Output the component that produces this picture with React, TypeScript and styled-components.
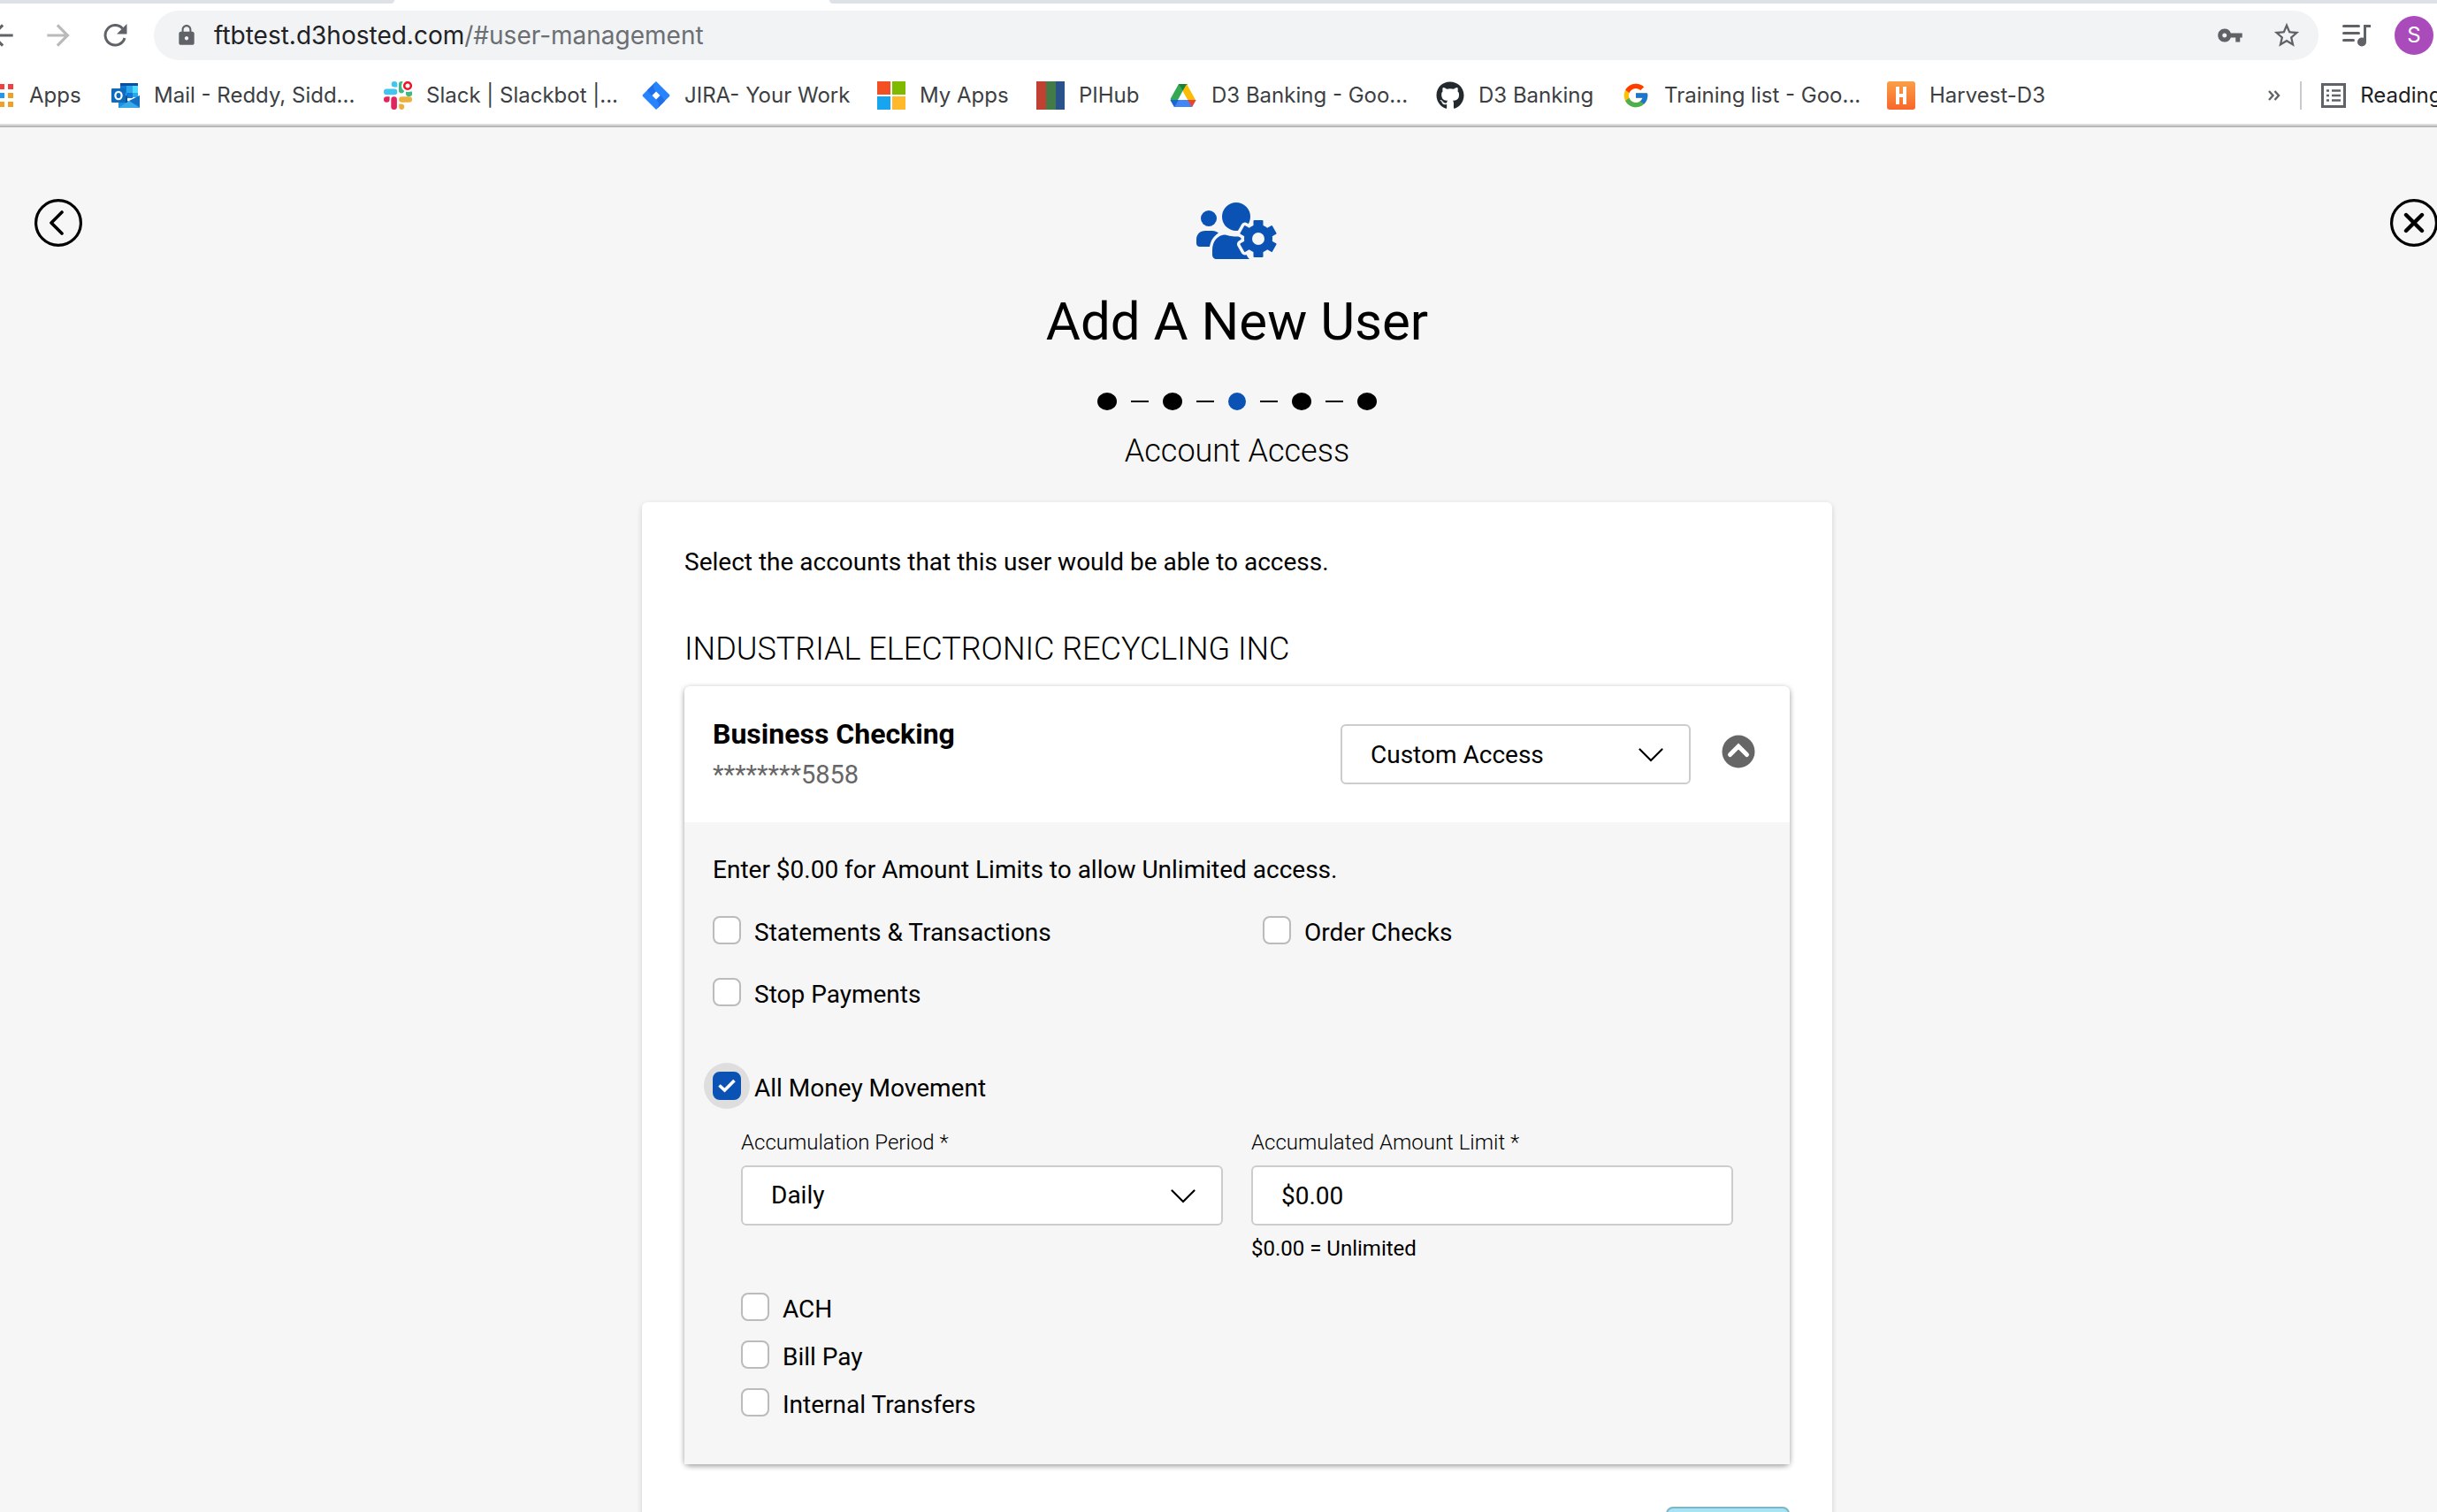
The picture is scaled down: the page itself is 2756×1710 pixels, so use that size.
import React, { useState } from "react";
import styled, { createGlobalStyle, css } from "styled-components";
import { FaGithub } from "react-icons/fa";
import { FcGoogle } from "react-icons/fc";
import { MdArrowBack, MdArrowForward, MdLock, MdVpnKey, MdStarBorder } from "react-icons/md";

const BLUE = "#0a53b5";
const PAGE = "#f6f6f6";

const GlobalStyle = createGlobalStyle`
  *, *::before, *::after { box-sizing: border-box; }
  body { margin: 0; font-family: Roboto, "Liberation Sans", sans-serif; font-size: 28px; color: #000; }
  button, input, select { font: inherit; color: inherit; margin: 0; }
`;

const Screen = styled.div`
  height: 100vh;
  overflow: hidden;
  background: ${PAGE};
`;

/* ---------- browser chrome ---------- */

const Chrome = styled.header`
  background: #fff;
  border-bottom: 2px solid #b8b8b8;
  box-shadow: inset 0 -2px 0 #dcdcdc;
  font-family: Inter, "Liberation Sans", sans-serif;
`;

const TabStrip = styled.div`
  display: grid;
  grid-template-columns: 446fr 492px 1818fr;
  height: 6px;
`;

const InactiveTab = styled.div<{ $side: "left" | "right" }>`
  grid-column: ${(p) => (p.$side === "left" ? 1 : 3)};
  height: 4px;
  background: #dee1e6;
  border-bottom-right-radius: ${(p) => (p.$side === "left" ? 8 : 0)}px;
  border-bottom-left-radius: ${(p) => (p.$side === "right" ? 8 : 0)}px;
`;

const Toolbar = styled.div`
  display: flex;
  align-items: center;
  height: 68px;
  margin-left: -26px;
  padding-right: 4px;
`;

const IconButton = styled.button<{ $width?: number; $color?: string }>`
  display: flex;
  flex: none;
  align-items: center;
  justify-content: center;
  width: ${(p) => p.$width ?? 56}px;
  height: 56px;
  padding: 0;
  border: 0;
  background: none;
  color: ${(p) => p.$color ?? "#5f6368"};
`;

const Nav = styled.nav`
  display: flex;
  gap: 8px;
  margin-right: 16px;
`;

const AddressBar = styled.div`
  display: flex;
  flex: 1;
  align-items: center;
  gap: 8px;
  height: 56px;
  padding: 0 8px 0 24px;
  border-radius: 28px;
  background: #f1f3f4;
  color: #5f6368;
`;

const Url = styled.span`
  flex: 1;
  padding-left: 10px;
  font-size: 28px;
  line-height: 36px;
  color: #6b6e72;
`;

const Host = styled.span`
  color: #202124;
`;

const Avatar = styled.button`
  width: 44px;
  height: 44px;
  padding: 0;
  border: 0;
  border-radius: 50%;
  background: #aa4bbb;
  color: #fff;
  font-size: 24px;
  line-height: 44px;
`;

const Bookmarks = styled.div`
  display: flex;
  align-items: center;
  height: 68px;
  margin-left: -11px;
  font-size: 24px;
  color: #3c4043;
`;

const Bookmark = styled.a<{ $width?: number }>`
  display: flex;
  flex: none;
  align-items: center;
  gap: 16px;
  width: ${(p) => (p.$width ? p.$width + "px" : "auto")};
  color: inherit;
  line-height: 32px;
  text-decoration: none;
  white-space: nowrap;
  svg { flex: none; }
`;

const Divider = styled.span`
  width: 2px;
  height: 32px;
  background: #c6c9cd;
`;

const Spacer = styled.div`
  flex: 1;
`;

const Overflow = styled.div`
  display: flex;
  align-items: center;
  gap: 22px;
  margin-right: -52px;
  color: #202124;
`;

/* ---------- page ---------- */

const Page = styled.main`
  display: grid;
  grid-template-columns: 56px minmax(0, 1346px) 54px;
  justify-content: space-between;
  align-items: start;
  width: calc(100% + 40px);
  padding: 81px 39px 0;
`;

const RoundButton = styled.button`
  display: flex;
  width: 54px;
  height: 54px;
  padding: 0;
  border: 0;
  background: none;
`;

const Wizard = styled.div`
  display: flex;
  flex-direction: column;
  align-items: center;
  padding-top: 4px;
`;

const Title = styled.h1`
  margin: 33px 0 0;
  font-size: 60px;
  font-weight: 400;
  line-height: 76px;
`;

const Steps = styled.ol`
  display: flex;
  align-items: center;
  gap: 16px;
  margin: 42px 0 0;
  padding: 0;
  list-style: none;
`;

const Dot = styled.li<{ $active?: boolean }>`
  width: ${(p) => (p.$active ? 20 : 22)}px;
  height: 20px;
  border-radius: 50%;
  background: ${(p) => (p.$active ? BLUE : "#000")};
`;

const Dash = styled.li`
  width: 20px;
  height: 2px;
  background: #000;
`;

const heading = css`
  font-size: 36px;
  font-weight: 300;
  line-height: 44px;
`;

const StepName = styled.h2`
  ${heading}
  margin: 24px 0 36px;
`;

const Card = styled.section`
  width: 100%;
  padding: 48px;
  border-radius: 6px;
  background: #fff;
  box-shadow: 0 2px 6px rgba(0, 0, 0, 0.16);
`;

const Text = styled.p`
  margin: 0;
  line-height: 40px;
`;

const Company = styled.h3`
  ${heading}
  margin: 56px 0 20px;
`;

const Account = styled.section`
  border-radius: 6px;
  background: #fff;
  box-shadow: 0 2px 6px rgba(0, 0, 0, 0.4);
`;

const AccountHead = styled.header`
  display: flex;
  align-items: center;
  height: 154px;
  padding: 0 39px 0 32px;
`;

const AccountName = styled.div`
  display: grid;
  flex: 1;
  gap: 2px;
  line-height: 44px;
  h4 { margin: 0; font-size: 32px; font-weight: 700; }
  p { margin: 0; font-size: 29px; color: #666; }
`;

const SelectBox = styled.div<{ $width?: number }>`
  position: relative;
  width: ${(p) => (p.$width ? p.$width + "px" : "100%")};
  svg { position: absolute; right: 31px; top: 27px; pointer-events: none; }
`;

const control = css`
  display: block;
  width: 100%;
  height: 68px;
  padding: 0 32px;
  border: 2px solid #ccc;
  border-radius: 6px;
  background: #fff;
  appearance: none;
`;

const Select = styled.select`
  ${control}
`;

const Input = styled.input`
  ${control}
`;

const Toggle = styled.button`
  display: flex;
  width: 38px;
  height: 38px;
  margin: 0 0 6px 35px;
  padding: 0;
  border: 0;
  background: none;
`;

const AccountBody = styled.div`
  padding: 34px 32px 46px;
  background: ${PAGE};
`;

const Permissions = styled.div`
  display: grid;
  grid-template-columns: 1fr 1fr;
  gap: 28px 58px;
  margin: 30px 0 64px;
`;

const CheckRow = styled.label`
  display: flex;
  align-items: flex-start;
  gap: 15px;
  line-height: 42px;
`;

const CheckBox = styled.input`
  flex: none;
  width: 32px;
  height: 32px;
  border: 2px solid #bbb;
  border-radius: 8px;
  background: #fff;
  appearance: none;
  &:checked {
    border-color: ${BLUE};
    background: ${BLUE};
  }
`;

const CheckMark = styled.span<{ $halo?: boolean }>`
  position: relative;
  display: flex;
  width: 32px;
  height: 32px;
  margin-top: 2px;
  border-radius: 50%;
  box-shadow: ${(p) => (p.$halo ? "0 0 0 10px #dedede" : "none")};
  background: ${(p) => (p.$halo ? "#dedede" : "none")};
  svg { position: absolute; left: 6px; top: 8px; pointer-events: none; }
`;

const Nested = styled.div`
  padding: 0 32px;
`;

const Fields = styled.div`
  display: grid;
  grid-template-columns: 1fr 1fr;
  gap: 32px;
  margin: 24px 0 32px;
`;

const Field = styled.div`
  font-size: 24px;
  line-height: 32px;
  > label { display: block; margin-bottom: 10px; font-weight: 300; }
  select, input { font-size: 28px; }
  p { margin: 10px 0 0; }
`;

const Stack = styled.div`
  display: grid;
  gap: 12px;
`;

const Actions = styled.footer`
  display: flex;
  justify-content: flex-end;
  padding-top: 48px;
`;

const NextButton = styled.button`
  width: 140px;
  height: 68px;
  border: 2px solid #7fb5c4;
  border-radius: 8px;
  background: #a6e3f4;
`;

/* ---------- drawings ---------- */

const ReloadIcon = () => (
  <svg width="28" height="28" viewBox="0 0 28 28" fill="none">
    <path d="M22.5 6.2A11.2 11.2 0 1 0 25 17" stroke="currentColor" strokeWidth="3" />
    <path d="M27.5 1v11.5H16z" fill="currentColor" />
  </svg>
);

const QueueIcon = () => (
  <svg width="32" height="28" viewBox="0 0 32 28" fill="none">
    <path d="M1.5 3.5h17M1.5 11.5h17M1.5 19.5h11" stroke="currentColor" strokeWidth="3" strokeLinecap="round" />
    <path d="M25.5 21V3.5H32" stroke="currentColor" strokeWidth="3" />
    <circle cx="22" cy="21.5" r="5" fill="currentColor" />
  </svg>
);

const AppsIcon = () => (
  <svg width="28" height="28" viewBox="0 0 28 28">
    {["#f44336", "#f43f3f", "#f43f3f", "#4caf50", "#2196f3", "#f0a023", "#4caf50", "#f0a023", "#f0a023"].map((c, i) => (
      <rect key={i} x={(i % 3) * 10} y={1 + Math.floor(i / 3) * 10} width="6" height="6" fill={c} />
    ))}
  </svg>
);

const OutlookIcon = () => (
  <svg width="32" height="32" viewBox="0 0 32 32">
    <path d="M10 2h20v16H10z" fill="#28a8ea" />
    <path d="M10 2h20v3H10z" fill="#0a4f9e" />
    <path d="M10 5h7v8h-7z" fill="#0f78d4" />
    <path d="M24 5h6v8h-6z" fill="#50d9ff" />
    <path d="M17 13h7v6h-7z" fill="#0f78d4" />
    <path d="M8 16l12 7 12-7v14H8z" fill="#1f8fdd" />
    <path d="M8 30h24L20 22z" fill="#38aaea" />
    <path d="M20 22l12-6v13z" fill="#1470c4" />
    <path d="M8 24h10v-8l-10 2z" fill="#0c5299" />
    <rect x="0" y="8" width="16" height="16" rx="1" fill="#0f6cbd" />
    <ellipse cx="8" cy="16" rx="3.6" ry="4.2" fill="none" stroke="#fff" strokeWidth="2.2" />
  </svg>
);

const SlackIcon = () => (
  <svg width="32" height="32" viewBox="0 0 32 32">
    <path d="M12 0a3.3 3.3 0 0 1 3.3 3.3v3.3H12a3.3 3.3 0 0 1 0-6.6zM3.3 8.6H12a3.3 3.3 0 0 1 0 6.6H3.3a3.3 3.3 0 0 1 0-6.6z" fill="#44c5f0" />
    <path d="M17 3a3 3 0 0 1 6 0v8.5a3.3 3.3 0 0 1-6 0zM25 11.5h7a3.3 3.3 0 0 1-7 3.5z" fill="#41b883" />
    <path d="M32 20.5a3.3 3.3 0 0 1-3.3 3.3h-8.2a3.3 3.3 0 0 1 0-6.6h8.2a3.3 3.3 0 0 1 3.3 3.3zM20.5 32a3.3 3.3 0 0 1-3.3-3.3v-3.2h3.3a3.3 3.3 0 0 1 0 6.5z" fill="#ecb13c" />
    <path d="M0 20.5a3.3 3.3 0 0 1 3.3-3.3h3.3v3.3a3.3 3.3 0 0 1-6.6 0zM8.3 20.5a3.3 3.3 0 0 1 6.6 0v8.2a3.3 3.3 0 0 1-6.6 0z" fill="#e0245e" />
    <circle cx="27" cy="5" r="7" fill="#fff" />
    <circle cx="27" cy="5" r="3.8" fill="#fff" stroke="#f01428" strokeWidth="2.6" />
  </svg>
);

const JiraIcon = () => (
  <svg width="32" height="32" viewBox="0 0 32 32">
    <path d="M16 0l15 15a1.5 1.5 0 0 1 0 2L16 32 1 17a1.5 1.5 0 0 1 0-2z" fill="#2684ff" />
    <path d="M16 0c-4 4-4 8 0 11.5L11 16.5 6 10z" fill="#1f6fe8" />
    <path d="M16 32c4-4 4-8 0-11.5L21 15.5 26 22z" fill="#1f6fe8" />
    <path d="M16 11.5l4.5 4.5-4.5 4.5-4.5-4.5z" fill="#fff" />
  </svg>
);

const MicrosoftIcon = () => (
  <svg width="32" height="32" viewBox="0 0 32 32">
    <path d="M0 0h15v15H0z" fill="#f25022" />
    <path d="M17 0h15v15H17z" fill="#7fba00" />
    <path d="M0 17h15v15H0z" fill="#18a5ef" />
    <path d="M17 17h15v15H17z" fill="#ffb92a" />
  </svg>
);

const StripesIcon = () => (
  <svg width="32" height="32" viewBox="0 0 32 32">
    <path d="M0 0h11v32H0z" fill="#c04132" />
    <path d="M11 0h11v32H11z" fill="#437a48" />
    <path d="M22 0h10v32H22z" fill="#2a528a" />
  </svg>
);

const DriveIcon = () => (
  <svg width="32" height="32" viewBox="0 0 32 32">
    <path d="M11 3h9l-4.5 8L7 28 1.5 20z" fill="#34a853" />
    <path d="M11 3h10l-5 8z" fill="#188038" />
    <path d="M20 3l10 18h-9L15.5 11z" fill="#fbbc04" />
    <path d="M1.5 21h29L26 29H6z" fill="#4285f4" />
    <path d="M1.5 21H11l-5 8z" fill="#1967d2" />
    <path d="M21 21h9.5L26 29z" fill="#ea4335" />
    <path d="M15.5 11.5L21 21H10z" fill="#fff" />
  </svg>
);

const HarvestIcon = () => (
  <svg width="32" height="32" viewBox="0 0 32 32">
    <defs>
      <linearGradient id="harvest" x1="0" y1="0" x2="0" y2="1">
        <stop offset="0" stopColor="#fa9f47" />
        <stop offset="1" stopColor="#f8672a" />
      </linearGradient>
    </defs>
    <rect width="32" height="32" rx="3" fill="url(#harvest)" />
    <path d="M10 6h4v8h4V6h4v20h-4v-8h-4v8h-4z" fill="#fff" />
  </svg>
);

const ReadingListIcon = () => (
  <svg width="28" height="28" viewBox="0 0 28 28" fill="none" stroke="#5f6368">
    <path d="M1.5 1.5h25v25h-25z" strokeWidth="3" />
    <path d="M6 8.5h3M12 8.5h10M6 14h3M12 14h10M6 19.5h3M12 19.5h10" strokeWidth="2.6" />
  </svg>
);

const ChevronsIcon = () => (
  <svg width="14" height="12" viewBox="0 0 14 12" fill="none" stroke="#5f6368" strokeWidth="2.4">
    <path d="M1 1l4.5 5L1 11M7.5 1l4.5 5-4.5 5" />
  </svg>
);

const BackCircleIcon = () => (
  <svg width="54" height="54" viewBox="0 0 54 54" fill="none" stroke="#000" strokeLinecap="round" strokeLinejoin="round">
    <circle cx="27" cy="27" r="25.4" strokeWidth="3.2" />
    <path d="M31 15L19 27l12 12" strokeWidth="3.6" />
  </svg>
);

const CloseCircleIcon = () => (
  <svg width="54" height="54" viewBox="0 0 54 54" fill="none" stroke="#000" strokeLinecap="round">
    <circle cx="27" cy="27" r="25.4" strokeWidth="3.2" />
    <path d="M18 18l18 18M36 18L18 36" strokeWidth="4.4" />
  </svg>
);

const Gear = () => (
  <>
    <circle cx="70" cy="41" r="16" />
    {[0, 60, 120].map((angle) => (
      <rect key={angle} x="64.5" y="20" width="11" height="42" rx="1" transform={`rotate(${angle} 70 41)`} />
    ))}
  </>
);

const UsersGearIcon = () => (
  <svg width="92" height="64" viewBox="0 0 92 64" fill={BLUE}>
    <circle cx="14" cy="18" r="9" />
    <path d="M10 32h8c3 0 5 1 7 2.5-6 4-9 9-10 15.5H4c-2.5 0-4-1.5-4-4v-4c0-6 4-10 10-10z" />
    <circle cx="45" cy="16" r="16" />
    <path d="M33 36.5c4 1.5 14 3 20 1.5 4 8-2 16 7 26H23c-3 0-5-2-5-5v-5c0-10 6-17.5 15-17.5z" />
    <g stroke={PAGE} strokeWidth="7" strokeLinejoin="round">
      <Gear />
    </g>
    <Gear />
    <circle cx="70" cy="41" r="7" fill={PAGE} />
  </svg>
);

const ChevronDown = () => (
  <svg width="28" height="16" viewBox="0 0 28 16" fill="none">
    <path d="M1.5 1.5L14 14 26.5 1.5" stroke="#000" strokeWidth="2.2" strokeLinecap="round" />
  </svg>
);

const ToggleIcon = () => (
  <svg width="38" height="38" viewBox="0 0 38 38" fill="none">
    <circle cx="19" cy="19" r="18.5" fill="#666" />
    <path d="M9.5 22.5l9.5-9.5 9.5 9.5" stroke="#fff" strokeWidth="5" strokeLinecap="round" />
  </svg>
);

const TickIcon = () => (
  <svg width="20" height="16" viewBox="0 0 20 16" fill="none">
    <path d="M1.5 7.5L7.5 13 18.5 2" stroke="#fff" strokeWidth="3.6" />
  </svg>
);

const bookmarks = [
  { label: "Apps", icon: <AppsIcon />, width: 137 },
  { label: "Mail - Reddy, Sidd...", icon: <OutlookIcon />, width: 308 },
  { label: "Slack | Slackbot |...", icon: <SlackIcon />, width: 292 },
  { label: "JIRA- Your Work", icon: <JiraIcon />, width: 266 },
  { label: "My Apps", icon: <MicrosoftIcon />, width: 180 },
  { label: "PIHub", icon: <StripesIcon />, width: 150 },
  { label: "D3 Banking - Goo...", icon: <DriveIcon />, width: 302 },
  { label: "D3 Banking", icon: <FaGithub size={32} color="#24292e" />, width: 210 },
  { label: "Training list - Goo...", icon: <FcGoogle size={32} />, width: 300 },
  { label: "Harvest-D3", icon: <HarvestIcon />, width: 200 },
];

function Check({ label, focused }: { label: string; focused?: boolean }) {
  const [checked, setChecked] = useState(!!focused);
  return (
    <CheckRow>
      <CheckMark $halo={focused}>
        <CheckBox type="checkbox" checked={checked} onChange={() => setChecked(!checked)} />
        {checked && <TickIcon />}
      </CheckMark>
      {label}
    </CheckRow>
  );
}

export default function App() {
  return (
    <Screen>
      <GlobalStyle />
      <Chrome>
        <TabStrip>
          <InactiveTab $side="left" />
          <InactiveTab $side="right" />
        </TabStrip>
        <Toolbar>
          <Nav>
            <IconButton aria-label="Back"><MdArrowBack size={38} /></IconButton>
            <IconButton aria-label="Forward" $color="#bababa"><MdArrowForward size={38} /></IconButton>
            <IconButton aria-label="Reload"><ReloadIcon /></IconButton>
          </Nav>
          <AddressBar>
            <MdLock size={26} />
            <Url><Host>ftbtest.d3hosted.com</Host>/#user-management</Url>
            <IconButton aria-label="Passwords"><MdVpnKey size={30} /></IconButton>
            <IconButton aria-label="Bookmark this page"><MdStarBorder size={34} /></IconButton>
          </AddressBar>
          <IconButton aria-label="Media controls" $width={86}><QueueIcon /></IconButton>
          <Avatar>S</Avatar>
        </Toolbar>
        <Bookmarks>
          {bookmarks.map((b) => (
            <Bookmark key={b.label} href="#" $width={b.width}>{b.icon}{b.label}</Bookmark>
          ))}
          <Spacer />
          <Overflow>
            <ChevronsIcon />
            <Divider />
            <Bookmark href="#"><ReadingListIcon />Reading List</Bookmark>
          </Overflow>
        </Bookmarks>
      </Chrome>

      <Page>
        <RoundButton aria-label="Go back"><BackCircleIcon /></RoundButton>
        <Wizard>
          <UsersGearIcon />
          <Title>Add A New User</Title>
          <Steps aria-label="Progress">
            <Dot /><Dash /><Dot /><Dash /><Dot $active /><Dash /><Dot /><Dash /><Dot />
          </Steps>
          <StepName>Account Access</StepName>
          <Card>
            <Text>Select the accounts that this user would be able to access.</Text>
            <Company>INDUSTRIAL ELECTRONIC RECYCLING INC</Company>
            <Account>
              <AccountHead>
                <AccountName>
                  <h4>Business Checking</h4>
                  <p>********5858</p>
                </AccountName>
                <SelectBox $width={396}>
                  <Select aria-label="Access level"><option>Custom Access</option></Select>
                  <ChevronDown />
                </SelectBox>
                <Toggle aria-label="Collapse account"><ToggleIcon /></Toggle>
              </AccountHead>
              <AccountBody>
                <Text>Enter $0.00 for Amount Limits to allow Unlimited access.</Text>
                <Permissions>
                  <Check label="Statements &amp; Transactions" />
                  <Check label="Order Checks" />
                  <Check label="Stop Payments" />
                </Permissions>
                <Check label="All Money Movement" focused />
                <Nested>
                  <Fields>
                    <Field>
                      <label htmlFor="period">Accumulation Period *</label>
                      <SelectBox>
                        <Select id="period"><option>Daily</option></Select>
                        <ChevronDown />
                      </SelectBox>
                    </Field>
                    <Field>
                      <label htmlFor="limit">Accumulated Amount Limit *</label>
                      <Input id="limit" defaultValue="$0.00" />
                      <p>$0.00 = Unlimited</p>
                    </Field>
                  </Fields>
                  <Stack>
                    <Check label="ACH" />
                    <Check label="Bill Pay" />
                    <Check label="Internal Transfers" />
                  </Stack>
                </Nested>
              </AccountBody>
            </Account>
            <Actions><NextButton aria-label="Continue" /></Actions>
          </Card>
        </Wizard>
        <RoundButton aria-label="Close"><CloseCircleIcon /></RoundButton>
      </Page>
    </Screen>
  );
}
